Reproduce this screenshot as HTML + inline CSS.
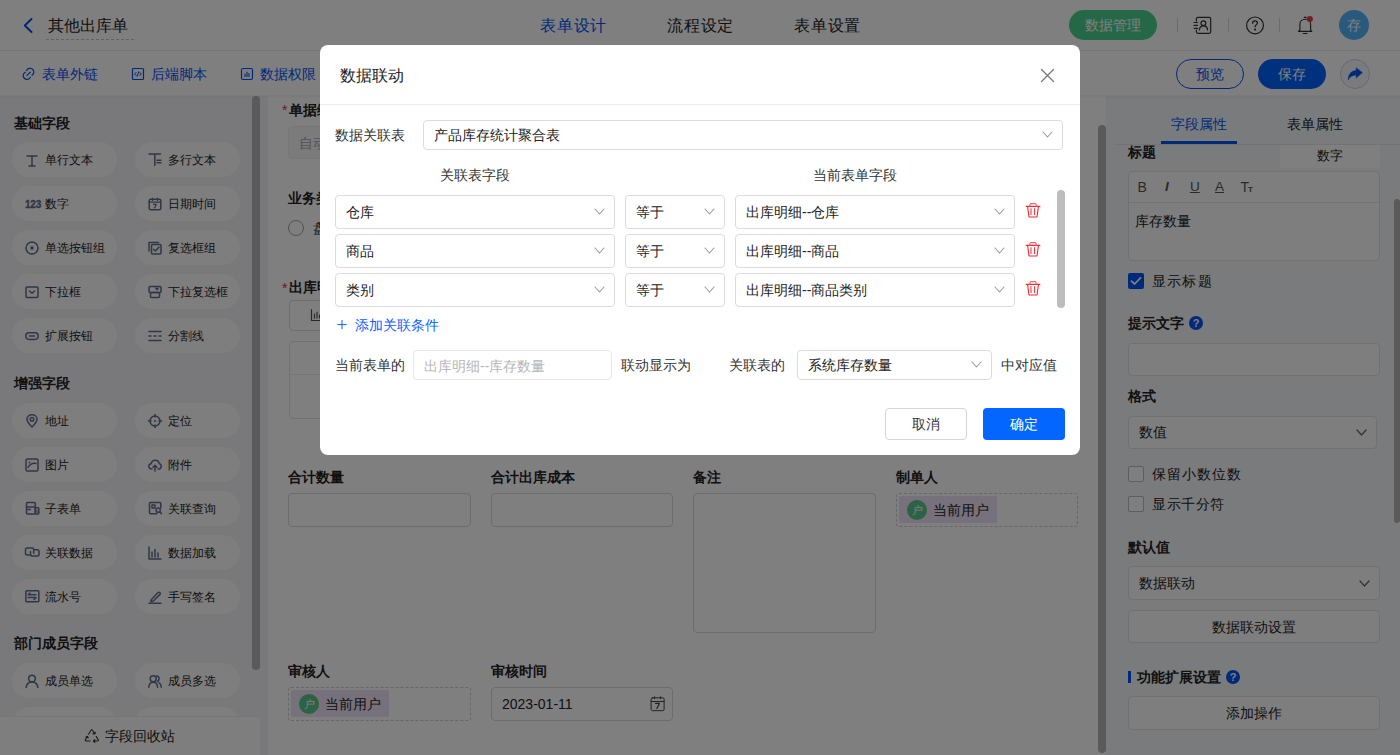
<!DOCTYPE html>
<html><head><meta charset="utf-8">
<style>
*{box-sizing:border-box;margin:0;padding:0}
html,body{width:1400px;height:755px;overflow:hidden;background:#fff;font-family:"Liberation Sans",sans-serif;color:#222;font-size:14px}
.a{position:absolute}
.t{position:absolute;white-space:nowrap}
</style></head><body>
<div class="a" style="left:0px;top:0px;width:1400px;height:51px;background:#fff;border-bottom:1px solid #ececec"></div>
<svg class="a" style="left:22px;top:17px;overflow:visible" width="12" height="17" viewBox="0 0 12 17" fill="none" stroke-linecap="round" stroke-linejoin="round"><path d="M9.5 2 L2.8 8.5 L9.5 15" stroke="#0a4fe0" stroke-width="2"/></svg>
<div class="t" style="left:48px;top:17.5px;font-size:16px;line-height:16px;color:#222;">其他出库单</div>
<div class="a" style="left:46px;top:39px;width:88px;height:1px;border-top:1px dashed #c4c4c4"></div>
<div class="t" style="left:540px;top:17.5px;font-size:16px;line-height:16px;color:#0052f5;letter-spacing:0.8px">表单设计</div>
<div class="t" style="left:667px;top:17.5px;font-size:16px;line-height:16px;color:#222;letter-spacing:0.8px">流程设定</div>
<div class="t" style="left:794px;top:17.5px;font-size:16px;line-height:16px;color:#222;letter-spacing:0.8px">表单设置</div>
<div class="a" style="left:1069px;top:10px;width:88px;height:30px;border-radius:15px;background:#4bd08e"></div>
<div class="t" style="left:1069.0px;top:18.0px;width:88px;text-align:center;font-size:14px;line-height:14px;color:#fff;">数据管理</div>
<div class="a" style="left:1177px;top:18px;width:1px;height:14px;background:#d6d6d6"></div>
<div class="a" style="left:1228px;top:18px;width:1px;height:14px;background:#d6d6d6"></div>
<div class="a" style="left:1279px;top:18px;width:1px;height:14px;background:#d6d6d6"></div>
<svg class="a" style="left:1192px;top:15px;overflow:visible" width="20" height="20" viewBox="0 0 20 20" fill="none" stroke-linecap="round" stroke-linejoin="round"><path d="M4.4 6 V3.8 C4.4 3 5 2.3 5.8 2.3 H17.3 C18.1 2.3 18.7 3 18.7 3.8 V16.8 C18.7 17.6 18.1 18.3 17.3 18.3 H5.8 C5 18.3 4.4 17.6 4.4 16.8 V15" stroke="#333" stroke-width="1.2"/><path d="M2.1 7.5 H5.6 M2.1 10.4 H5.6 M2.1 13.3 H5.6" stroke="#333" stroke-width="1.2"/><circle cx="11.4" cy="8.3" r="2.4" stroke="#333" stroke-width="1.2"/><path d="M7.4 15 C7.6 12.4 9.3 10.9 11.5 10.9 C13.7 10.9 15.4 12.4 15.6 15" stroke="#333" stroke-width="1.2"/></svg>
<svg class="a" style="left:1245px;top:15px;overflow:visible" width="20" height="20" viewBox="0 0 20 20" fill="none" stroke-linecap="round" stroke-linejoin="round"><circle cx="10" cy="10.4" r="8.4" stroke="#333" stroke-width="1.2"/><path d="M7.6 8.2 C7.6 6.6 8.7 5.8 10 5.8 C11.4 5.8 12.4 6.7 12.4 7.9 C12.4 9.5 10.1 9.8 10.1 11.8" stroke="#333" stroke-width="1.3"/><circle cx="10.1" cy="14.4" r="1" fill="#333"/></svg>
<svg class="a" style="left:1295px;top:14px;overflow:visible" width="22" height="22" viewBox="0 0 22 22" fill="none" stroke-linecap="round" stroke-linejoin="round"><path d="M3.4 17.3 H16.8 L15.6 15.8 V10.3 C15.6 7.3 13.3 5.2 10.25 5.2 C7.2 5.2 4.9 7.3 4.9 10.3 V15.8 Z" stroke="#333" stroke-width="1.15"/><path d="M9.2 3.3 H11.3 M8.4 19.5 H12" stroke="#333" stroke-width="1.2"/><circle cx="14.9" cy="5.1" r="3" fill="#ec3b3b" stroke="none"/></svg>
<div class="a" style="left:1339px;top:10px;width:30px;height:30px;border-radius:50%;background:#52b4fa"></div>
<div class="t" style="left:1339.0px;top:18.0px;width:30px;text-align:center;font-size:14px;line-height:14px;color:#fff;">存</div>
<div class="a" style="left:0px;top:51px;width:1400px;height:45px;background:#fff"></div>
<svg class="a" style="left:22px;top:67px;overflow:visible" width="14" height="14" viewBox="0 0 14 14" fill="none" stroke-linecap="round" stroke-linejoin="round"><path d="M4.6 3.4 A3.8 3.8 0 1 1 10 8.3 M8.4 10.3 A3.8 3.8 0 1 1 3.3 5.2 M4.9 8.4 L8.4 5.3" stroke="#0052f5" stroke-width="1.2"/></svg>
<div class="t" style="left:42px;top:67.0px;font-size:14px;line-height:14px;color:#0052f5;">表单外链</div>
<svg class="a" style="left:131px;top:67px;overflow:visible" width="14" height="14" viewBox="0 0 14 14" fill="none" stroke-linecap="round" stroke-linejoin="round"><rect x="1.5" y="1.5" width="11" height="11" rx="1" stroke="#0052f5" stroke-width="1.2"/><path d="M5 5.5 L3.6 7 L5 8.5 M9 5.5 L10.4 7 L9 8.5 M7.8 4.8 L6.2 9.2" stroke="#0052f5" stroke-width="1"/></svg>
<div class="t" style="left:151px;top:67.0px;font-size:14px;line-height:14px;color:#0052f5;">后端脚本</div>
<svg class="a" style="left:240px;top:67px;overflow:visible" width="14" height="14" viewBox="0 0 14 14" fill="none" stroke-linecap="round" stroke-linejoin="round"><rect x="1.5" y="1.5" width="11" height="11" rx="1.5" stroke="#0052f5" stroke-width="1.2"/><path d="M5 9.5 V7 M7 9.5 V5 M9 9.5 V6.5" stroke="#0052f5" stroke-width="1.1"/></svg>
<div class="t" style="left:260px;top:67.0px;font-size:14px;line-height:14px;color:#0052f5;">数据权限</div>
<div class="a" style="left:1176px;top:59px;width:68px;height:30px;border-radius:15px;border:1px solid #0052f5"></div>
<div class="t" style="left:1176.0px;top:67.0px;width:68px;text-align:center;font-size:14px;line-height:14px;color:#0052f5;">预览</div>
<div class="a" style="left:1258px;top:59px;width:68px;height:30px;border-radius:15px;background:#0062ff"></div>
<div class="t" style="left:1258.0px;top:67.0px;width:68px;text-align:center;font-size:14px;line-height:14px;color:#fff;">保存</div>
<div class="a" style="left:1340px;top:59px;width:30px;height:30px;border-radius:50%;border:1px solid #c9d2e8;background:#f5f7fb"></div>
<svg class="a" style="left:1345px;top:64px;overflow:visible" width="20" height="20" viewBox="0 0 20 20" fill="none" stroke-linecap="round" stroke-linejoin="round"><path d="M17.3 8.5 L11.2 3.8 V6.5 C6.5 6.8 3.2 10 3.1 16 C4.5 12.8 7.2 11.2 11.2 11.2 V13.9 Z" fill="#0052f5" stroke="#0052f5" stroke-width="0.4"/></svg>
<div class="a" style="left:0px;top:96px;width:268px;height:659px;background:#f2f3f7"></div>
<div class="a" style="left:252px;top:96px;width:8px;height:574px;border-radius:4px;background:#b4b4b6"></div>
<div class="t" style="left:14px;top:116.0px;font-size:14px;line-height:14px;color:#222;font-weight:bold;">基础字段</div>
<div class="a" style="left:12px;top:142px;width:105px;height:35px;border-radius:17.5px;background:#fdfdfd"></div>
<svg class="a" style="left:25px;top:152.5px;overflow:visible" width="14" height="14" viewBox="0 0 14 14" fill="none" stroke-linecap="round" stroke-linejoin="round"><path d="M2 3 H12 M7 3 V13 M4 13 H10" stroke="#5f6d8e" stroke-width="1.5"/></svg>
<div class="t" style="left:45px;top:153.5px;font-size:12px;line-height:12px;color:#222;">单行文本</div>
<div class="a" style="left:135px;top:142px;width:105px;height:35px;border-radius:17.5px;background:#fdfdfd"></div>
<svg class="a" style="left:148px;top:152.5px;overflow:visible" width="14" height="14" viewBox="0 0 14 14" fill="none" stroke-linecap="round" stroke-linejoin="round"><path d="M1 1 H12.5 M6.8 1 V12.5 M9 7.2 H13 M9 9.8 H13" stroke="#5f6d8e" stroke-width="1.5"/></svg>
<div class="t" style="left:168px;top:153.5px;font-size:12px;line-height:12px;color:#222;">多行文本</div>
<div class="a" style="left:12px;top:186px;width:105px;height:35px;border-radius:17.5px;background:#fdfdfd"></div>
<svg class="a" style="left:25px;top:196.5px;overflow:visible" width="14" height="14" viewBox="0 0 14 14" fill="none" stroke-linecap="round" stroke-linejoin="round"><text x="0" y="11" font-family="Liberation Sans" font-weight="bold" font-size="10" fill="#5f6d8e" stroke="#5f6d8e" stroke-width="0.35" letter-spacing="-0.2">123</text></svg>
<div class="t" style="left:45px;top:197.5px;font-size:12px;line-height:12px;color:#222;">数字</div>
<div class="a" style="left:135px;top:186px;width:105px;height:35px;border-radius:17.5px;background:#fdfdfd"></div>
<svg class="a" style="left:148px;top:196.5px;overflow:visible" width="14" height="14" viewBox="0 0 14 14" fill="none" stroke-linecap="round" stroke-linejoin="round"><rect x="1.2" y="2.2" width="11.6" height="10.6" rx="1.5" stroke="#5f6d8e" stroke-width="1.5"/><path d="M1.2 5.2 H12.8 M4.5 1 V3.4 M9.5 1 V3.4 M5.5 7.3 H8.2 L6.6 11" stroke="#5f6d8e" stroke-width="1.2"/></svg>
<div class="t" style="left:168px;top:197.5px;font-size:12px;line-height:12px;color:#222;">日期时间</div>
<div class="a" style="left:12px;top:230px;width:105px;height:35px;border-radius:17.5px;background:#fdfdfd"></div>
<svg class="a" style="left:25px;top:240.5px;overflow:visible" width="14" height="14" viewBox="0 0 14 14" fill="none" stroke-linecap="round" stroke-linejoin="round"><circle cx="7" cy="7" r="6" stroke="#5f6d8e" stroke-width="1.5"/><circle cx="7" cy="7" r="1.8" fill="#5f6d8e" stroke="none"/></svg>
<div class="t" style="left:45px;top:241.5px;font-size:12px;line-height:12px;color:#222;">单选按钮组</div>
<div class="a" style="left:135px;top:230px;width:105px;height:35px;border-radius:17.5px;background:#fdfdfd"></div>
<svg class="a" style="left:148px;top:240.5px;overflow:visible" width="14" height="14" viewBox="0 0 14 14" fill="none" stroke-linecap="round" stroke-linejoin="round"><path d="M1 10 V1.5 H10.5" stroke="#5f6d8e" stroke-width="1.5"/><rect x="3.5" y="3.5" width="9.5" height="9.5" rx="1" stroke="#5f6d8e" stroke-width="1.5"/><path d="M5.5 8.2 L7.5 10 L11 6" stroke="#5f6d8e" stroke-width="1.5"/></svg>
<div class="t" style="left:168px;top:241.5px;font-size:12px;line-height:12px;color:#222;">复选框组</div>
<div class="a" style="left:12px;top:274px;width:105px;height:35px;border-radius:17.5px;background:#fdfdfd"></div>
<svg class="a" style="left:25px;top:284.5px;overflow:visible" width="14" height="14" viewBox="0 0 14 14" fill="none" stroke-linecap="round" stroke-linejoin="round"><rect x="1" y="2" width="12" height="10.5" rx="1" stroke="#5f6d8e" stroke-width="1.5"/><path d="M4.5 6 L7 8.2 L9.5 6" stroke="#5f6d8e" stroke-width="1.5"/></svg>
<div class="t" style="left:45px;top:285.5px;font-size:12px;line-height:12px;color:#222;">下拉框</div>
<div class="a" style="left:135px;top:274px;width:105px;height:35px;border-radius:17.5px;background:#fdfdfd"></div>
<svg class="a" style="left:148px;top:284.5px;overflow:visible" width="14" height="14" viewBox="0 0 14 14" fill="none" stroke-linecap="round" stroke-linejoin="round"><rect x="1" y="1.5" width="12" height="6" rx="1.2" stroke="#5f6d8e" stroke-width="1.5"/><rect x="2.5" y="7.5" width="9" height="5" rx="1" stroke="#5f6d8e" stroke-width="1.5"/><path d="M7.8 3 L9 4.6 L10.2 3" stroke="#5f6d8e" stroke-width="1.5"/></svg>
<div class="t" style="left:168px;top:285.5px;font-size:12px;line-height:12px;color:#222;">下拉复选框</div>
<div class="a" style="left:12px;top:318px;width:105px;height:35px;border-radius:17.5px;background:#fdfdfd"></div>
<svg class="a" style="left:25px;top:328.5px;overflow:visible" width="14" height="14" viewBox="0 0 14 14" fill="none" stroke-linecap="round" stroke-linejoin="round"><rect x="0.8" y="3.8" width="12.4" height="6.6" rx="3.3" stroke="#5f6d8e" stroke-width="1.5"/><path d="M4.5 7.1 H9.5" stroke="#5f6d8e" stroke-width="1.5"/></svg>
<div class="t" style="left:45px;top:329.5px;font-size:12px;line-height:12px;color:#222;">扩展按钮</div>
<div class="a" style="left:135px;top:318px;width:105px;height:35px;border-radius:17.5px;background:#fdfdfd"></div>
<svg class="a" style="left:148px;top:328.5px;overflow:visible" width="14" height="14" viewBox="0 0 14 14" fill="none" stroke-linecap="round" stroke-linejoin="round"><path d="M1 2.5 H13 M1 7 H3 M6 7 H8 M11 7 H13 M1 11.5 H13" stroke="#5f6d8e" stroke-width="1.5"/></svg>
<div class="t" style="left:168px;top:329.5px;font-size:12px;line-height:12px;color:#222;">分割线</div>
<div class="t" style="left:14px;top:376.0px;font-size:14px;line-height:14px;color:#222;font-weight:bold;">增强字段</div>
<div class="a" style="left:12px;top:403px;width:105px;height:35px;border-radius:17.5px;background:#fdfdfd"></div>
<svg class="a" style="left:25px;top:413.5px;overflow:visible" width="14" height="14" viewBox="0 0 14 14" fill="none" stroke-linecap="round" stroke-linejoin="round"><path d="M7 13 C3.5 9.5 2 7.3 2 5.2 C2 2.6 4.2 0.8 7 0.8 C9.8 0.8 12 2.6 12 5.2 C12 7.3 10.5 9.5 7 13 Z" stroke="#5f6d8e" stroke-width="1.5"/><circle cx="7" cy="5.3" r="1.8" stroke="#5f6d8e" stroke-width="1.5"/></svg>
<div class="t" style="left:45px;top:414.5px;font-size:12px;line-height:12px;color:#222;">地址</div>
<div class="a" style="left:135px;top:403px;width:105px;height:35px;border-radius:17.5px;background:#fdfdfd"></div>
<svg class="a" style="left:148px;top:413.5px;overflow:visible" width="14" height="14" viewBox="0 0 14 14" fill="none" stroke-linecap="round" stroke-linejoin="round"><circle cx="7" cy="7" r="5" stroke="#5f6d8e" stroke-width="1.5"/><circle cx="7" cy="7" r="1" fill="#5f6d8e" stroke="none"/><path d="M7 0.5 V3 M7 11 V13.5 M0.5 7 H3 M11 7 H13.5" stroke="#5f6d8e" stroke-width="1.5"/></svg>
<div class="t" style="left:168px;top:414.5px;font-size:12px;line-height:12px;color:#222;">定位</div>
<div class="a" style="left:12px;top:447px;width:105px;height:35px;border-radius:17.5px;background:#fdfdfd"></div>
<svg class="a" style="left:25px;top:457.5px;overflow:visible" width="14" height="14" viewBox="0 0 14 14" fill="none" stroke-linecap="round" stroke-linejoin="round"><rect x="1" y="1" width="12" height="12" rx="1.5" stroke="#5f6d8e" stroke-width="1.5"/><path d="M3 9.5 C5 6 8 5 11 5.5" stroke="#5f6d8e" stroke-width="1.5"/><circle cx="4.5" cy="4.5" r="0.9" fill="#5f6d8e" stroke="none"/></svg>
<div class="t" style="left:45px;top:458.5px;font-size:12px;line-height:12px;color:#222;">图片</div>
<div class="a" style="left:135px;top:447px;width:105px;height:35px;border-radius:17.5px;background:#fdfdfd"></div>
<svg class="a" style="left:148px;top:457.5px;overflow:visible" width="14" height="14" viewBox="0 0 14 14" fill="none" stroke-linecap="round" stroke-linejoin="round"><path d="M4 11 H3.5 C1.9 11 0.8 9.8 0.8 8.3 C0.8 6.9 1.9 5.8 3.2 5.7 C3.6 3.6 5.2 2.2 7.2 2.2 C9.4 2.2 11 3.8 11.2 5.8 C12.4 6 13.2 7 13.2 8.3 C13.2 9.8 12.1 11 10.6 11 H10" stroke="#5f6d8e" stroke-width="1.5"/><path d="M7 13 V7.5 M5 9.3 L7 7.3 L9 9.3" stroke="#5f6d8e" stroke-width="1.5"/></svg>
<div class="t" style="left:168px;top:458.5px;font-size:12px;line-height:12px;color:#222;">附件</div>
<div class="a" style="left:12px;top:491px;width:105px;height:35px;border-radius:17.5px;background:#fdfdfd"></div>
<svg class="a" style="left:25px;top:501.5px;overflow:visible" width="14" height="14" viewBox="0 0 14 14" fill="none" stroke-linecap="round" stroke-linejoin="round"><rect x="1.5" y="0.5" width="8.8" height="11.6" rx="1" stroke="#5f6d8e" stroke-width="1.5"/><path d="M1.5 4.9 H10.3 M2.6 7.5 H5.4" stroke="#5f6d8e" stroke-width="1.5"/><rect x="10.3" y="5.8" width="3.5" height="6.3" rx="0.8" stroke="#5f6d8e" stroke-width="1.5"/><path d="M12 8 V10.5" stroke="#5f6d8e" stroke-width="1"/></svg>
<div class="t" style="left:45px;top:502.5px;font-size:12px;line-height:12px;color:#222;">子表单</div>
<div class="a" style="left:135px;top:491px;width:105px;height:35px;border-radius:17.5px;background:#fdfdfd"></div>
<svg class="a" style="left:148px;top:501.5px;overflow:visible" width="14" height="14" viewBox="0 0 14 14" fill="none" stroke-linecap="round" stroke-linejoin="round"><path d="M12.8 6 V1.5 C12.8 0.9 12.4 0.5 11.8 0.5 H2.5 C1.9 0.5 1.5 0.9 1.5 1.5 V10.8 C1.5 11.4 1.9 11.8 2.5 11.8 H8.8" stroke="#5f6d8e" stroke-width="1.5"/><rect x="4" y="2.9" width="3" height="3.1" stroke="#5f6d8e" stroke-width="1.5"/><circle cx="10.2" cy="8.2" r="2.1" stroke="#5f6d8e" stroke-width="1.5"/><path d="M11.8 9.8 L13.4 11.6" stroke="#5f6d8e" stroke-width="1.5"/></svg>
<div class="t" style="left:168px;top:502.5px;font-size:12px;line-height:12px;color:#222;">关联查询</div>
<div class="a" style="left:12px;top:535px;width:105px;height:35px;border-radius:17.5px;background:#fdfdfd"></div>
<svg class="a" style="left:25px;top:545.5px;overflow:visible" width="14" height="14" viewBox="0 0 14 14" fill="none" stroke-linecap="round" stroke-linejoin="round"><path d="M5.6 9 H2 C1.1 9 0.5 8.4 0.5 7.5 V3.6 C0.5 2.7 1.1 2.1 2 2.1 H7.2 C8.1 2.1 8.7 2.7 8.7 3.6 V7.2" stroke="#5f6d8e" stroke-width="1.5"/><path d="M8.7 3.8 H12.5 C13.4 3.8 14 4.4 14 5.3 V8.6 C14 9.5 13.4 10.1 12.5 10.1 H7 C6.1 10.1 5.5 9.5 5.5 8.6 V5.4" stroke="#5f6d8e" stroke-width="1.5"/></svg>
<div class="t" style="left:45px;top:546.5px;font-size:12px;line-height:12px;color:#222;">关联数据</div>
<div class="a" style="left:135px;top:535px;width:105px;height:35px;border-radius:17.5px;background:#fdfdfd"></div>
<svg class="a" style="left:148px;top:545.5px;overflow:visible" width="14" height="14" viewBox="0 0 14 14" fill="none" stroke-linecap="round" stroke-linejoin="round"><path d="M1 1 V13 H13 M4 11 V6 M7 11 V3.5 M10 11 V7" stroke="#5f6d8e" stroke-width="1.5"/></svg>
<div class="t" style="left:168px;top:546.5px;font-size:12px;line-height:12px;color:#222;">数据加载</div>
<div class="a" style="left:12px;top:579px;width:105px;height:35px;border-radius:17.5px;background:#fdfdfd"></div>
<svg class="a" style="left:25px;top:589.5px;overflow:visible" width="14" height="14" viewBox="0 0 14 14" fill="none" stroke-linecap="round" stroke-linejoin="round"><rect x="0.9" y="0.7" width="12.9" height="11.1" rx="0.8" stroke="#5f6d8e" stroke-width="1.5"/><path d="M3.2 4.8 H10.9 M3.2 4.8 L5 3 M3.2 7.6 H10.9 M10.9 7.6 L9.1 9.4" stroke="#5f6d8e" stroke-width="1.5"/></svg>
<div class="t" style="left:45px;top:590.5px;font-size:12px;line-height:12px;color:#222;">流水号</div>
<div class="a" style="left:135px;top:579px;width:105px;height:35px;border-radius:17.5px;background:#fdfdfd"></div>
<svg class="a" style="left:148px;top:589.5px;overflow:visible" width="14" height="14" viewBox="0 0 14 14" fill="none" stroke-linecap="round" stroke-linejoin="round"><path d="M3.5 9.5 L9.8 2.8 C10.5 2.1 11.5 2.1 12 2.7 C12.5 3.2 12.4 4 11.8 4.6 L5.3 11 L2.8 11.5 Z" stroke="#5f6d8e" stroke-width="1.5"/><path d="M1 13.2 H13" stroke="#5f6d8e" stroke-width="1.5"/></svg>
<div class="t" style="left:168px;top:590.5px;font-size:12px;line-height:12px;color:#222;">手写签名</div>
<div class="t" style="left:14px;top:636.0px;font-size:14px;line-height:14px;color:#222;font-weight:bold;">部门成员字段</div>
<div class="a" style="left:12px;top:663px;width:105px;height:35px;border-radius:17.5px;background:#fdfdfd"></div>
<svg class="a" style="left:25px;top:673.5px;overflow:visible" width="14" height="14" viewBox="0 0 14 14" fill="none" stroke-linecap="round" stroke-linejoin="round"><circle cx="7" cy="4.5" r="3.3" stroke="#5f6d8e" stroke-width="1.5"/><path d="M1.2 13.5 C1.5 9.8 4 8 7 8 C10 8 12.5 9.8 12.8 13.5" stroke="#5f6d8e" stroke-width="1.5"/></svg>
<div class="t" style="left:45px;top:674.5px;font-size:12px;line-height:12px;color:#222;">成员单选</div>
<div class="a" style="left:135px;top:663px;width:105px;height:35px;border-radius:17.5px;background:#fdfdfd"></div>
<svg class="a" style="left:148px;top:673.5px;overflow:visible" width="14" height="14" viewBox="0 0 14 14" fill="none" stroke-linecap="round" stroke-linejoin="round"><circle cx="5.2" cy="4.8" r="3" stroke="#5f6d8e" stroke-width="1.5"/><path d="M0.8 13.2 C1 9.8 2.8 8.2 5.2 8.2 C7.6 8.2 9.4 9.8 9.6 13.2" stroke="#5f6d8e" stroke-width="1.5"/><path d="M8.5 1.9 C10 2 11.1 3.2 11.1 4.7 C11.1 6 10.3 7 9.2 7.5 M10.8 8.6 C12.3 9.4 13.2 11 13.3 13.2" stroke="#5f6d8e" stroke-width="1.5"/></svg>
<div class="t" style="left:168px;top:674.5px;font-size:12px;line-height:12px;color:#222;">成员多选</div>
<div class="a" style="left:12px;top:707px;width:105px;height:35px;border-radius:17.5px;background:#fdfdfd"></div>
<svg class="a" style="left:25px;top:717.5px;overflow:visible" width="14" height="14" viewBox="0 0 14 14" fill="none" stroke-linecap="round" stroke-linejoin="round"><circle cx="7" cy="4.5" r="3.3" stroke="#5f6d8e" stroke-width="1.5"/><path d="M1.2 13.5 C1.5 9.8 4 8 7 8 C10 8 12.5 9.8 12.8 13.5" stroke="#5f6d8e" stroke-width="1.5"/></svg>
<div class="t" style="left:45px;top:718.5px;font-size:12px;line-height:12px;color:#222;"></div>
<div class="a" style="left:135px;top:707px;width:105px;height:35px;border-radius:17.5px;background:#fdfdfd"></div>
<svg class="a" style="left:148px;top:717.5px;overflow:visible" width="14" height="14" viewBox="0 0 14 14" fill="none" stroke-linecap="round" stroke-linejoin="round"><circle cx="5.2" cy="4.8" r="3" stroke="#5f6d8e" stroke-width="1.5"/><path d="M0.8 13.2 C1 9.8 2.8 8.2 5.2 8.2 C7.6 8.2 9.4 9.8 9.6 13.2" stroke="#5f6d8e" stroke-width="1.5"/><path d="M8.5 1.9 C10 2 11.1 3.2 11.1 4.7 C11.1 6 10.3 7 9.2 7.5 M10.8 8.6 C12.3 9.4 13.2 11 13.3 13.2" stroke="#5f6d8e" stroke-width="1.5"/></svg>
<div class="t" style="left:168px;top:718.5px;font-size:12px;line-height:12px;color:#222;"></div>
<div class="a" style="left:0px;top:716px;width:260px;height:39px;background:#fdfdfd;border-top:1px solid #efeff1"></div>
<svg class="a" style="left:84px;top:728px;overflow:visible" width="16" height="16" viewBox="0 0 16 16" fill="none" stroke-linecap="round" stroke-linejoin="round"><path d="M4.6 6.2 L7 2.2 C7.4 1.5 8.2 1.5 8.6 2.2 L10.8 6 M9 5.6 L10.8 6 L11.3 4.2 M12.2 8.4 L14.3 12 C14.6 12.6 14.2 13 13.6 13 H9.4 M10.8 11.6 L9.4 13 L10.8 14.3 M6.2 13 H2 C1.4 13 1 12.6 1.3 12 L3.4 8.4 M1.9 9 L3.4 8.4 L4.2 9.8" stroke="#333" stroke-width="1.1"/></svg>
<div class="t" style="left:105px;top:729.0px;font-size:14px;line-height:14px;color:#222;">字段回收站</div>
<div class="a" style="left:268px;top:96px;width:838px;height:659px;background:#fff"></div>
<div class="a" style="left:1098px;top:125px;width:8px;height:628px;border-radius:4px;background:#b4b4b6"></div>
<div class="t" style="left:282px;top:102.5px;font-size:14px;line-height:14px;color:#d9352f;">*</div>
<div class="t" style="left:289px;top:102.5px;font-size:14px;line-height:14px;color:#222;font-weight:bold;">单据编号</div>
<div class="a" style="left:288px;top:126px;width:400px;height:33px;border-radius:4px;background:#f6f6f6;border:1px solid #efefef"></div>
<div class="t" style="left:299px;top:136.0px;font-size:14px;line-height:14px;color:#a8a8a8;">自动生成</div>
<div class="t" style="left:288px;top:191.0px;font-size:14px;line-height:14px;color:#222;font-weight:bold;">业务类型</div>
<div class="a" style="left:288px;top:220px;width:16px;height:16px;border-radius:50%;border:1px solid #a4a4ac;background:#fff"></div>
<div class="t" style="left:313px;top:221.0px;font-size:14px;line-height:14px;color:#222;">盘亏出库</div>
<div class="t" style="left:282px;top:281.0px;font-size:14px;line-height:14px;color:#d9352f;">*</div>
<div class="t" style="left:289px;top:280.0px;font-size:14px;line-height:14px;color:#222;font-weight:bold;">出库明细</div>
<div class="a" style="left:289px;top:300px;width:120px;height:31px;border-radius:4px;border:1px solid #dcdcdc;background:#fff"></div>
<svg class="a" style="left:310px;top:308px;overflow:visible" width="14" height="14" viewBox="0 0 14 14" fill="none" stroke-linecap="round" stroke-linejoin="round"><path d="M1.5 1.5 V12.5 H12.5 M4.5 10 V6 M7 10 V4 M9.5 10 V7" stroke="#555" stroke-width="1.2"/></svg>
<div class="a" style="left:289px;top:341px;width:790px;height:78px;border-radius:4px;border:1px solid #e3e3e3;background:#fff"></div>
<div class="a" style="left:289px;top:374px;width:790px;height:1px;background:#ececec"></div>
<div class="t" style="left:288px;top:470.0px;font-size:14px;line-height:14px;color:#222;font-weight:bold;">合计数量</div>
<div class="t" style="left:491px;top:470.0px;font-size:14px;line-height:14px;color:#222;font-weight:bold;">合计出库成本</div>
<div class="t" style="left:693px;top:470.0px;font-size:14px;line-height:14px;color:#222;font-weight:bold;">备注</div>
<div class="t" style="left:896px;top:470.0px;font-size:14px;line-height:14px;color:#222;font-weight:bold;">制单人</div>
<div class="a" style="left:288px;top:493px;width:183px;height:34px;border-radius:4px;border:1px solid #d9d9d9;background:#fff"></div>
<div class="a" style="left:491px;top:493px;width:182px;height:34px;border-radius:4px;border:1px solid #d9d9d9;background:#fff"></div>
<div class="a" style="left:693px;top:493px;width:183px;height:140px;border-radius:4px;border:1px solid #d9d9d9;background:#fff"></div>
<div class="a" style="left:896px;top:493px;width:182px;height:34px;border-radius:3px;border:1px dashed #cfcfcf;background:#fff"></div>
<div class="a" style="left:899px;top:496px;width:98px;height:27px;border-radius:2px;background:#ede2f5"></div>
<div class="a" style="left:907px;top:500px;width:20px;height:20px;border-radius:50%;background:#5cc488"></div>
<div class="t" style="left:907.0px;top:504.5px;width:20px;text-align:center;font-size:11px;line-height:11px;color:#fff;">户</div>
<div class="t" style="left:933px;top:503.0px;font-size:14px;line-height:14px;color:#222;">当前用户</div>
<div class="t" style="left:288px;top:664.0px;font-size:14px;line-height:14px;color:#222;font-weight:bold;">审核人</div>
<div class="t" style="left:491px;top:664.0px;font-size:14px;line-height:14px;color:#222;font-weight:bold;">审核时间</div>
<div class="a" style="left:288px;top:687px;width:183px;height:34px;border-radius:3px;border:1px dashed #cfcfcf;background:#fff"></div>
<div class="a" style="left:291px;top:690px;width:98px;height:27px;border-radius:2px;background:#ede2f5"></div>
<div class="a" style="left:299px;top:694px;width:20px;height:20px;border-radius:50%;background:#5cc488"></div>
<div class="t" style="left:299.0px;top:698.5px;width:20px;text-align:center;font-size:11px;line-height:11px;color:#fff;">户</div>
<div class="t" style="left:325px;top:697.0px;font-size:14px;line-height:14px;color:#222;">当前用户</div>
<div class="a" style="left:491px;top:687px;width:182px;height:34px;border-radius:4px;border:1px solid #d9d9d9;background:#fff"></div>
<div class="t" style="left:502px;top:697.0px;font-size:14px;line-height:14px;color:#222;">2023-01-11</div>
<svg class="a" style="left:649px;top:696px;overflow:visible" width="16" height="16" viewBox="0 0 16 16" fill="none" stroke-linecap="round" stroke-linejoin="round"><rect x="2.1" y="1.8" width="13" height="12.9" rx="1.5" stroke="#444" stroke-width="1"/><path d="M2.1 5.5 H15.1 M5.6 0.8 V2.8 M11.6 0.8 V2.8" stroke="#444" stroke-width="1"/><path d="M6.6 7.4 H10.4 L7.9 12.4" stroke="#444" stroke-width="1.2"/></svg>
<div class="a" style="left:1106px;top:96px;width:294px;height:659px;background:#f5f6f9"></div>
<div class="a" style="left:1114px;top:144px;width:286px;height:1px;background:#e6e6e6"></div>
<div class="t" style="left:1149.0px;top:117.0px;width:100px;text-align:center;font-size:14px;line-height:14px;color:#0052f5;">字段属性</div>
<div class="a" style="left:1161px;top:141px;width:76px;height:3px;background:#0052f5"></div>
<div class="t" style="left:1265.0px;top:117.0px;width:100px;text-align:center;font-size:14px;line-height:14px;color:#222;">表单属性</div>
<div class="t" style="left:1128px;top:145.0px;font-size:14px;line-height:14px;color:#222;font-weight:bold;">标题</div>
<div class="a" style="left:1280px;top:145px;width:100px;height:23px;background:#fefefe;border-radius:0 0 3px 3px"></div>
<div class="t" style="left:1280.0px;top:148.5px;width:100px;text-align:center;font-size:13px;line-height:13px;color:#222;">数字</div>
<div class="a" style="left:1128px;top:171px;width:252px;height:90px;border-radius:4px;border:1px solid #e2e2e2;background:#fcfcfd"></div>
<div class="a" style="left:1129px;top:202px;width:250px;height:1px;background:#e6e6e6"></div>
<div class="t" style="left:1137.5px;top:180.0px;font-size:14px;line-height:14px;color:#555;">B</div>
<div class="t" style="left:1165px;top:180.25px;font-size:13.5px;line-height:13.5px;color:#555;font-weight:bold;"><i>I</i></div>
<div class="t" style="left:1190px;top:180.25px;font-size:13.5px;line-height:13.5px;color:#555;"><u>U</u></div>
<div class="t" style="left:1215px;top:180.25px;font-size:13.5px;line-height:13.5px;color:#555;"><u>A</u></div>
<div class="t" style="left:1240.5px;top:180.0px;font-size:14px;line-height:14px;color:#555;letter-spacing:-1px">T<span style="font-size:8px;font-weight:bold">T</span></div>
<div class="t" style="left:1135px;top:214.0px;font-size:14px;line-height:14px;color:#222;">库存数量</div>
<div class="a" style="left:1128px;top:273px;width:16px;height:16px;border-radius:2px;background:#0052f5"></div>
<svg class="a" style="left:1128px;top:273px;overflow:visible" width="16" height="16" viewBox="0 0 16 16" fill="none" stroke-linecap="round" stroke-linejoin="round"><path d="M3.5 8.2 L6.6 11 L12.5 4.8" stroke="#fff" stroke-width="1.8"/></svg>
<div class="t" style="left:1152px;top:274.0px;font-size:14px;line-height:14px;color:#222;letter-spacing:1.2px">显示标题</div>
<div class="t" style="left:1128px;top:316.0px;font-size:14px;line-height:14px;color:#222;font-weight:bold;">提示文字</div>
<div class="a" style="left:1189px;top:316px;width:14px;height:14px;border-radius:50%;background:#0052f5"></div>
<div class="t" style="left:1189.0px;top:317.5px;width:14px;text-align:center;font-size:11px;line-height:11px;color:#fff;font-weight:bold;">?</div>
<div class="a" style="left:1128px;top:343px;width:252px;height:33px;border-radius:4px;border:1px solid #e2e2e2;background:#fcfcfd"></div>
<div class="t" style="left:1128px;top:389.0px;font-size:14px;line-height:14px;color:#222;font-weight:bold;">格式</div>
<div class="a" style="left:1128px;top:416px;width:249px;height:33px;border-radius:4px;border:1px solid #e2e2e2;background:#fcfcfd"></div>
<div class="t" style="left:1139px;top:425.0px;font-size:14px;line-height:14px;color:#222;">数值</div>
<svg class="a" style="left:1355.5px;top:428.5px;overflow:visible" width="11" height="7" viewBox="0 0 11 7" fill="none" stroke-linecap="round" stroke-linejoin="round"><path d="M1 1 L5.5 6 L10 1" stroke="#666" stroke-width="1.2"/></svg>
<div class="a" style="left:1128px;top:466px;width:16px;height:16px;border-radius:2px;border:1px solid #bdbdbd;background:#fff"></div>
<div class="t" style="left:1152px;top:467.0px;font-size:14px;line-height:14px;color:#222;letter-spacing:1px">保留小数位数</div>
<div class="a" style="left:1128px;top:496px;width:16px;height:16px;border-radius:2px;border:1px solid #bdbdbd;background:#fff"></div>
<div class="t" style="left:1152px;top:497.0px;font-size:14px;line-height:14px;color:#222;letter-spacing:0.6px">显示千分符</div>
<div class="t" style="left:1128px;top:540.0px;font-size:14px;line-height:14px;color:#222;font-weight:bold;">默认值</div>
<div class="a" style="left:1128px;top:566px;width:252px;height:34px;border-radius:4px;border:1px solid #e2e2e2;background:#fcfcfd"></div>
<div class="t" style="left:1139px;top:576.0px;font-size:14px;line-height:14px;color:#222;">数据联动</div>
<svg class="a" style="left:1358.5px;top:579.5px;overflow:visible" width="11" height="7" viewBox="0 0 11 7" fill="none" stroke-linecap="round" stroke-linejoin="round"><path d="M1 1 L5.5 6 L10 1" stroke="#666" stroke-width="1.2"/></svg>
<div class="a" style="left:1128px;top:610px;width:252px;height:33px;border-radius:4px;border:1px solid #e2e2e2;background:#fcfcfd"></div>
<div class="t" style="left:1154.0px;top:620.0px;width:200px;text-align:center;font-size:14px;line-height:14px;color:#222;">数据联动设置</div>
<div class="a" style="left:1128px;top:671px;width:3px;height:12px;background:#0052f5"></div>
<div class="t" style="left:1137px;top:670.0px;font-size:14px;line-height:14px;color:#222;font-weight:bold;">功能扩展设置</div>
<div class="a" style="left:1226px;top:670px;width:14px;height:14px;border-radius:50%;background:#0052f5"></div>
<div class="t" style="left:1226.0px;top:671.5px;width:14px;text-align:center;font-size:11px;line-height:11px;color:#fff;font-weight:bold;">?</div>
<div class="a" style="left:1128px;top:696px;width:252px;height:34px;border-radius:4px;border:1px solid #e2e2e2;background:#fcfcfd"></div>
<div class="t" style="left:1154.0px;top:706.0px;width:200px;text-align:center;font-size:14px;line-height:14px;color:#222;">添加操作</div>
<div class="a" style="left:1394px;top:199px;width:6px;height:324px;border-radius:3px;background:#b4b4b6"></div>
<div class="a" style="left:0px;top:95px;width:1400px;height:4px;background:linear-gradient(rgba(0,0,0,.05),rgba(0,0,0,0))"></div>
<div class="a" style="left:0px;top:0px;width:1400px;height:755px;background:rgba(0,0,0,.5)"></div>
<div class="a" style="left:320px;top:45px;width:760px;height:410px;border-radius:8px;background:#fff"></div>
<div class="t" style="left:340px;top:67.5px;font-size:16px;line-height:16px;color:#222;">数据联动</div>
<svg class="a" style="left:1040px;top:68px;overflow:visible" width="15" height="15" viewBox="0 0 15 15" fill="none" stroke-linecap="round" stroke-linejoin="round"><path d="M1.5 1.5 L13.5 13.5 M13.5 1.5 L1.5 13.5" stroke="#777" stroke-width="1.3"/></svg>
<div class="a" style="left:320px;top:104px;width:760px;height:1px;background:#ededed"></div>
<div class="t" style="left:335px;top:128.0px;font-size:14px;line-height:14px;color:#333;">数据关联表</div>
<div class="a" style="left:423px;top:120px;width:640px;height:30px;border-radius:4px;border:1px solid #dcdcdc;background:#fff"></div>
<div class="t" style="left:434px;top:127.5px;font-size:14px;line-height:14px;color:#222;">产品库存统计聚合表</div>
<svg class="a" style="left:1042.0px;top:131.0px;overflow:visible" width="11" height="7" viewBox="0 0 11 7" fill="none" stroke-linecap="round" stroke-linejoin="round"><path d="M1 1 L5.5 6 L10 1" stroke="#9a9a9a" stroke-width="1.1"/></svg>
<div class="t" style="left:375.0px;top:168.0px;width:200px;text-align:center;font-size:14px;line-height:14px;color:#333;">关联表字段</div>
<div class="t" style="left:755.0px;top:168.0px;width:200px;text-align:center;font-size:14px;line-height:14px;color:#333;">当前表单字段</div>
<div class="a" style="left:335px;top:195px;width:280px;height:34px;border-radius:4px;border:1px solid #dcdcdc;background:#fff"></div>
<div class="t" style="left:346px;top:204.5px;font-size:14px;line-height:14px;color:#222;">仓库</div>
<svg class="a" style="left:594.0px;top:208.0px;overflow:visible" width="11" height="7" viewBox="0 0 11 7" fill="none" stroke-linecap="round" stroke-linejoin="round"><path d="M1 1 L5.5 6 L10 1" stroke="#9a9a9a" stroke-width="1.1"/></svg>
<div class="a" style="left:625px;top:195px;width:100px;height:34px;border-radius:4px;border:1px solid #dcdcdc;background:#fff"></div>
<div class="t" style="left:636px;top:204.5px;font-size:14px;line-height:14px;color:#222;">等于</div>
<svg class="a" style="left:704.0px;top:208.0px;overflow:visible" width="11" height="7" viewBox="0 0 11 7" fill="none" stroke-linecap="round" stroke-linejoin="round"><path d="M1 1 L5.5 6 L10 1" stroke="#9a9a9a" stroke-width="1.1"/></svg>
<div class="a" style="left:735px;top:195px;width:280px;height:34px;border-radius:4px;border:1px solid #dcdcdc;background:#fff"></div>
<div class="t" style="left:746px;top:204.5px;font-size:14px;line-height:14px;color:#222;">出库明细--仓库</div>
<svg class="a" style="left:994.0px;top:208.0px;overflow:visible" width="11" height="7" viewBox="0 0 11 7" fill="none" stroke-linecap="round" stroke-linejoin="round"><path d="M1 1 L5.5 6 L10 1" stroke="#9a9a9a" stroke-width="1.1"/></svg>
<svg class="a" style="left:1025px;top:202px;overflow:visible" width="16" height="17" viewBox="0 0 16 17" fill="none" stroke-linecap="round" stroke-linejoin="round"><path d="M1.2 4.4 H14.8" stroke="#f5282f" stroke-width="1.2"/><path d="M4.8 4.2 V3 C4.8 2.1 5.4 1.6 6.3 1.6 H9.7 C10.6 1.6 11.2 2.1 11.2 3 V4.2" stroke="#f4606a" stroke-width="1.1"/><path d="M2.6 4.6 L4 15 H12 L13.4 4.6" stroke="#f5282f" stroke-width="1.1"/><path d="M6 6.6 V12.6 M9.6 6.6 V12.6" stroke="#f5282f" stroke-width="1"/></svg>
<div class="a" style="left:335px;top:234px;width:280px;height:34px;border-radius:4px;border:1px solid #dcdcdc;background:#fff"></div>
<div class="t" style="left:346px;top:243.5px;font-size:14px;line-height:14px;color:#222;">商品</div>
<svg class="a" style="left:594.0px;top:247.0px;overflow:visible" width="11" height="7" viewBox="0 0 11 7" fill="none" stroke-linecap="round" stroke-linejoin="round"><path d="M1 1 L5.5 6 L10 1" stroke="#9a9a9a" stroke-width="1.1"/></svg>
<div class="a" style="left:625px;top:234px;width:100px;height:34px;border-radius:4px;border:1px solid #dcdcdc;background:#fff"></div>
<div class="t" style="left:636px;top:243.5px;font-size:14px;line-height:14px;color:#222;">等于</div>
<svg class="a" style="left:704.0px;top:247.0px;overflow:visible" width="11" height="7" viewBox="0 0 11 7" fill="none" stroke-linecap="round" stroke-linejoin="round"><path d="M1 1 L5.5 6 L10 1" stroke="#9a9a9a" stroke-width="1.1"/></svg>
<div class="a" style="left:735px;top:234px;width:280px;height:34px;border-radius:4px;border:1px solid #dcdcdc;background:#fff"></div>
<div class="t" style="left:746px;top:243.5px;font-size:14px;line-height:14px;color:#222;">出库明细--商品</div>
<svg class="a" style="left:994.0px;top:247.0px;overflow:visible" width="11" height="7" viewBox="0 0 11 7" fill="none" stroke-linecap="round" stroke-linejoin="round"><path d="M1 1 L5.5 6 L10 1" stroke="#9a9a9a" stroke-width="1.1"/></svg>
<svg class="a" style="left:1025px;top:241px;overflow:visible" width="16" height="17" viewBox="0 0 16 17" fill="none" stroke-linecap="round" stroke-linejoin="round"><path d="M1.2 4.4 H14.8" stroke="#f5282f" stroke-width="1.2"/><path d="M4.8 4.2 V3 C4.8 2.1 5.4 1.6 6.3 1.6 H9.7 C10.6 1.6 11.2 2.1 11.2 3 V4.2" stroke="#f4606a" stroke-width="1.1"/><path d="M2.6 4.6 L4 15 H12 L13.4 4.6" stroke="#f5282f" stroke-width="1.1"/><path d="M6 6.6 V12.6 M9.6 6.6 V12.6" stroke="#f5282f" stroke-width="1"/></svg>
<div class="a" style="left:335px;top:273px;width:280px;height:34px;border-radius:4px;border:1px solid #dcdcdc;background:#fff"></div>
<div class="t" style="left:346px;top:282.5px;font-size:14px;line-height:14px;color:#222;">类别</div>
<svg class="a" style="left:594.0px;top:286.0px;overflow:visible" width="11" height="7" viewBox="0 0 11 7" fill="none" stroke-linecap="round" stroke-linejoin="round"><path d="M1 1 L5.5 6 L10 1" stroke="#9a9a9a" stroke-width="1.1"/></svg>
<div class="a" style="left:625px;top:273px;width:100px;height:34px;border-radius:4px;border:1px solid #dcdcdc;background:#fff"></div>
<div class="t" style="left:636px;top:282.5px;font-size:14px;line-height:14px;color:#222;">等于</div>
<svg class="a" style="left:704.0px;top:286.0px;overflow:visible" width="11" height="7" viewBox="0 0 11 7" fill="none" stroke-linecap="round" stroke-linejoin="round"><path d="M1 1 L5.5 6 L10 1" stroke="#9a9a9a" stroke-width="1.1"/></svg>
<div class="a" style="left:735px;top:273px;width:280px;height:34px;border-radius:4px;border:1px solid #dcdcdc;background:#fff"></div>
<div class="t" style="left:746px;top:282.5px;font-size:14px;line-height:14px;color:#222;">出库明细--商品类别</div>
<svg class="a" style="left:994.0px;top:286.0px;overflow:visible" width="11" height="7" viewBox="0 0 11 7" fill="none" stroke-linecap="round" stroke-linejoin="round"><path d="M1 1 L5.5 6 L10 1" stroke="#9a9a9a" stroke-width="1.1"/></svg>
<svg class="a" style="left:1025px;top:280px;overflow:visible" width="16" height="17" viewBox="0 0 16 17" fill="none" stroke-linecap="round" stroke-linejoin="round"><path d="M1.2 4.4 H14.8" stroke="#f5282f" stroke-width="1.2"/><path d="M4.8 4.2 V3 C4.8 2.1 5.4 1.6 6.3 1.6 H9.7 C10.6 1.6 11.2 2.1 11.2 3 V4.2" stroke="#f4606a" stroke-width="1.1"/><path d="M2.6 4.6 L4 15 H12 L13.4 4.6" stroke="#f5282f" stroke-width="1.1"/><path d="M6 6.6 V12.6 M9.6 6.6 V12.6" stroke="#f5282f" stroke-width="1"/></svg>
<div class="a" style="left:1057px;top:190px;width:8px;height:118px;border-radius:4px;background:#bdbdbd"></div>
<svg class="a" style="left:336px;top:318px;overflow:visible" width="12" height="12" viewBox="0 0 12 12" fill="none" stroke-linecap="round" stroke-linejoin="round"><path d="M6 2 V11.2 M1.4 6.6 H10.6" stroke="#1060ff" stroke-width="1" stroke-linecap="butt"/></svg>
<div class="t" style="left:355px;top:318.0px;font-size:14px;line-height:14px;color:#1060ff;">添加关联条件</div>
<div class="t" style="left:335px;top:358.0px;font-size:14px;line-height:14px;color:#333;">当前表单的</div>
<div class="a" style="left:413px;top:350px;width:199px;height:30px;border-radius:4px;border:1px solid #e8e8e8;background:#fff"></div>
<div class="t" style="left:424px;top:358.5px;font-size:14px;line-height:14px;color:#b5b5b5;">出库明细--库存数量</div>
<div class="t" style="left:621px;top:358.0px;font-size:14px;line-height:14px;color:#333;">联动显示为</div>
<div class="t" style="left:729px;top:358.0px;font-size:14px;line-height:14px;color:#333;">关联表的</div>
<div class="a" style="left:797px;top:350px;width:195px;height:30px;border-radius:4px;border:1px solid #dcdcdc;background:#fff"></div>
<div class="t" style="left:808px;top:357.5px;font-size:14px;line-height:14px;color:#222;">系统库存数量</div>
<svg class="a" style="left:971.0px;top:361.0px;overflow:visible" width="11" height="7" viewBox="0 0 11 7" fill="none" stroke-linecap="round" stroke-linejoin="round"><path d="M1 1 L5.5 6 L10 1" stroke="#9a9a9a" stroke-width="1.1"/></svg>
<div class="t" style="left:1001px;top:358.0px;font-size:14px;line-height:14px;color:#333;">中对应值</div>
<div class="a" style="left:885px;top:408px;width:82px;height:32px;border-radius:4px;border:1px solid #d4d4d4;background:#fff"></div>
<div class="t" style="left:885.0px;top:417.0px;width:82px;text-align:center;font-size:14px;line-height:14px;color:#333;">取消</div>
<div class="a" style="left:983px;top:408px;width:82px;height:32px;border-radius:4px;background:#0266ff"></div>
<div class="t" style="left:983.0px;top:417.0px;width:82px;text-align:center;font-size:14px;line-height:14px;color:#fff;">确定</div>
</body></html>
